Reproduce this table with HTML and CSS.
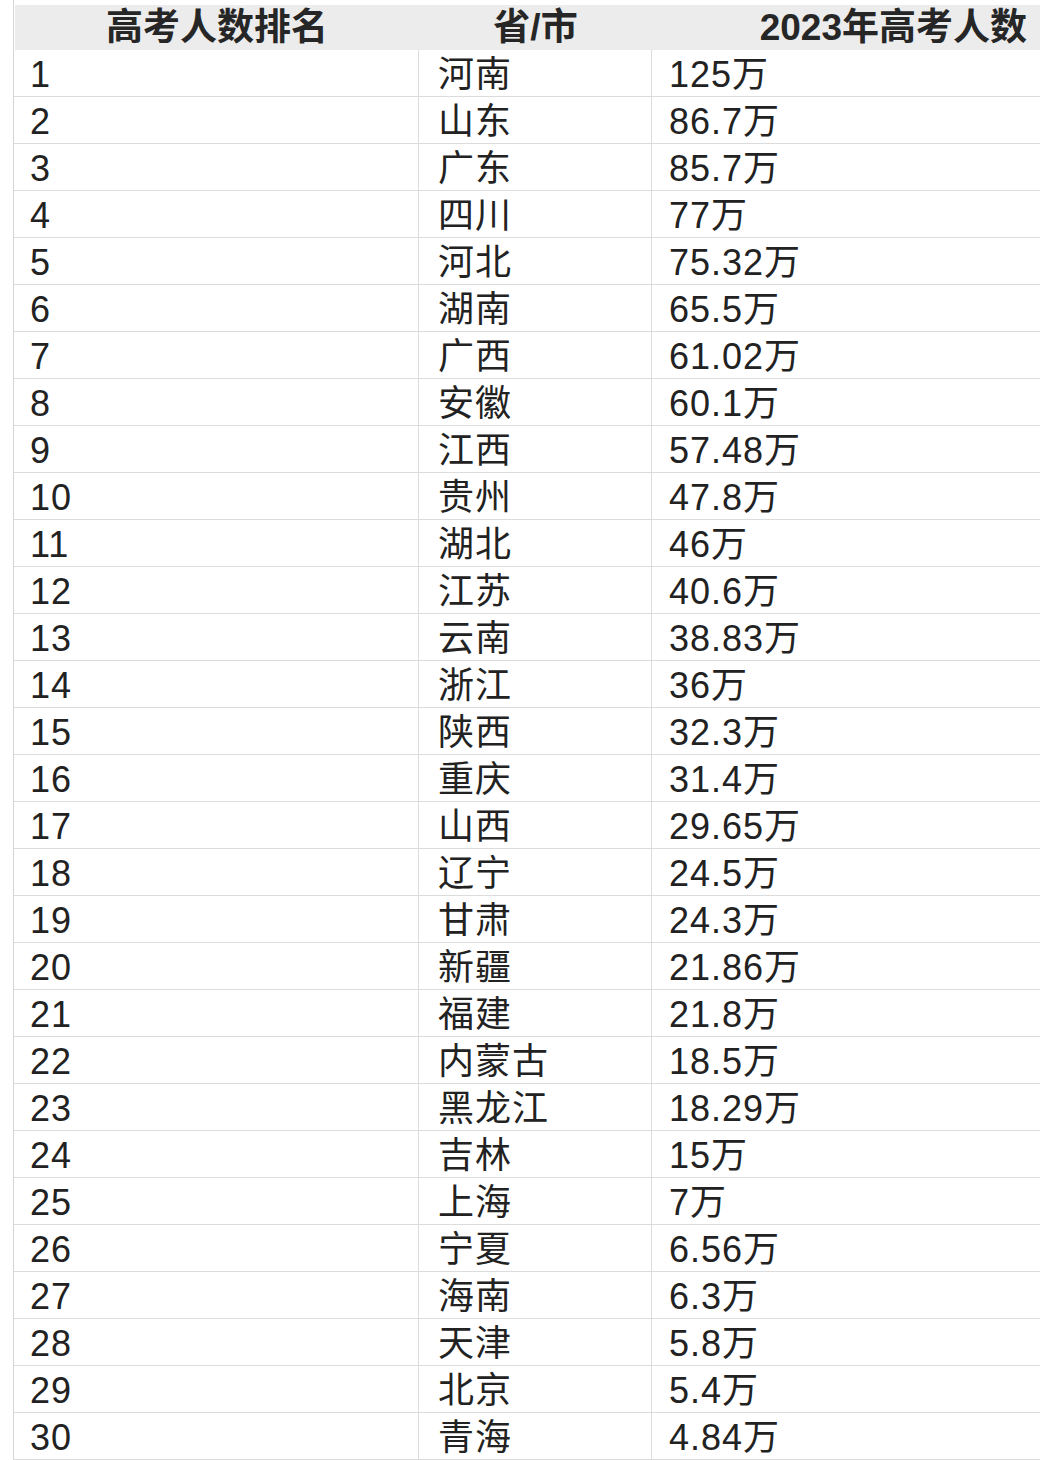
FILE: index.html
```html
<!DOCTYPE html>
<html lang="zh-CN">
<head>
<meta charset="utf-8">
<title>2023年高考人数</title>
<link rel="stylesheet" href="styles.css">
</head>
<body>
<div class="sheet">
  <div class="head">
    <div class="hc c1">高考人数排名</div>
    <div class="hc c2">省/市</div>
    <div class="hc c3">2023年高考人数</div>
  </div>
  <div class="rows" id="rows">
    <div class="row"><div class="c c1">1</div><div class="c c2">河南</div><div class="c c3">125万</div></div>
    <div class="row"><div class="c c1">2</div><div class="c c2">山东</div><div class="c c3">86.7万</div></div>
    <div class="row"><div class="c c1">3</div><div class="c c2">广东</div><div class="c c3">85.7万</div></div>
    <div class="row"><div class="c c1">4</div><div class="c c2">四川</div><div class="c c3">77万</div></div>
    <div class="row"><div class="c c1">5</div><div class="c c2">河北</div><div class="c c3">75.32万</div></div>
    <div class="row"><div class="c c1">6</div><div class="c c2">湖南</div><div class="c c3">65.5万</div></div>
    <div class="row"><div class="c c1">7</div><div class="c c2">广西</div><div class="c c3">61.02万</div></div>
    <div class="row"><div class="c c1">8</div><div class="c c2">安徽</div><div class="c c3">60.1万</div></div>
    <div class="row"><div class="c c1">9</div><div class="c c2">江西</div><div class="c c3">57.48万</div></div>
    <div class="row"><div class="c c1">10</div><div class="c c2">贵州</div><div class="c c3">47.8万</div></div>
    <div class="row"><div class="c c1">11</div><div class="c c2">湖北</div><div class="c c3">46万</div></div>
    <div class="row"><div class="c c1">12</div><div class="c c2">江苏</div><div class="c c3">40.6万</div></div>
    <div class="row"><div class="c c1">13</div><div class="c c2">云南</div><div class="c c3">38.83万</div></div>
    <div class="row"><div class="c c1">14</div><div class="c c2">浙江</div><div class="c c3">36万</div></div>
    <div class="row"><div class="c c1">15</div><div class="c c2">陕西</div><div class="c c3">32.3万</div></div>
    <div class="row"><div class="c c1">16</div><div class="c c2">重庆</div><div class="c c3">31.4万</div></div>
    <div class="row"><div class="c c1">17</div><div class="c c2">山西</div><div class="c c3">29.65万</div></div>
    <div class="row"><div class="c c1">18</div><div class="c c2">辽宁</div><div class="c c3">24.5万</div></div>
    <div class="row"><div class="c c1">19</div><div class="c c2">甘肃</div><div class="c c3">24.3万</div></div>
    <div class="row"><div class="c c1">20</div><div class="c c2">新疆</div><div class="c c3">21.86万</div></div>
    <div class="row"><div class="c c1">21</div><div class="c c2">福建</div><div class="c c3">21.8万</div></div>
    <div class="row"><div class="c c1">22</div><div class="c c2">内蒙古</div><div class="c c3">18.5万</div></div>
    <div class="row"><div class="c c1">23</div><div class="c c2">黑龙江</div><div class="c c3">18.29万</div></div>
    <div class="row"><div class="c c1">24</div><div class="c c2">吉林</div><div class="c c3">15万</div></div>
    <div class="row"><div class="c c1">25</div><div class="c c2">上海</div><div class="c c3">7万</div></div>
    <div class="row"><div class="c c1">26</div><div class="c c2">宁夏</div><div class="c c3">6.56万</div></div>
    <div class="row"><div class="c c1">27</div><div class="c c2">海南</div><div class="c c3">6.3万</div></div>
    <div class="row"><div class="c c1">28</div><div class="c c2">天津</div><div class="c c3">5.8万</div></div>
    <div class="row"><div class="c c1">29</div><div class="c c2">北京</div><div class="c c3">5.4万</div></div>
    <div class="row"><div class="c c1">30</div><div class="c c2">青海</div><div class="c c3">4.84万</div></div>
  </div>
</div>
</body>
</html>
```

FILE: styles.css
```css
html, body {
  margin: 0;
  padding: 0;
  background: #ffffff;
}

body {
  font-family: "Liberation Sans", Arial, "Noto Sans CJK SC", sans-serif;
  color: #222222;
  width: 1048px;
  height: 1460px;
  overflow: hidden;
}

.sheet {
  margin-left: 13px;
  width: 1027px;
  padding-top: 5px;
  border-left: 1px solid #d6d6d6;
  box-sizing: border-box;
  height: 1460px;
}

.head {
  display: grid;
  grid-template-columns: 404px 233px 389px;
  height: 45px;
  background: #ececec;
  margin-left: 1px;
}

.hc {
  font-size: 37px;
  font-weight: bold;
  line-height: 45px;
  color: #262626;
  white-space: nowrap;
}

.head .c1 { text-align: center; }
.head .c2 { text-align: center; }
.head .c3 { text-align: right; padding-right: 14px; }

.row {
  display: grid;
  grid-template-columns: 404px 233px 389px;
  height: 47px;
  box-sizing: border-box;
  border-bottom: 1px solid #dcdcdc;
}

.c {
  font-size: 36px;
  line-height: 50px;
  height: 46px;
  white-space: nowrap;
  letter-spacing: 1px;
}

.row .c1 { padding-left: 16px; }
.row .c2 { padding-left: 19px; border-left: 1px solid #dcdcdc; }
.row .c3 { padding-left: 17px; border-left: 1px solid #dcdcdc; }
```
